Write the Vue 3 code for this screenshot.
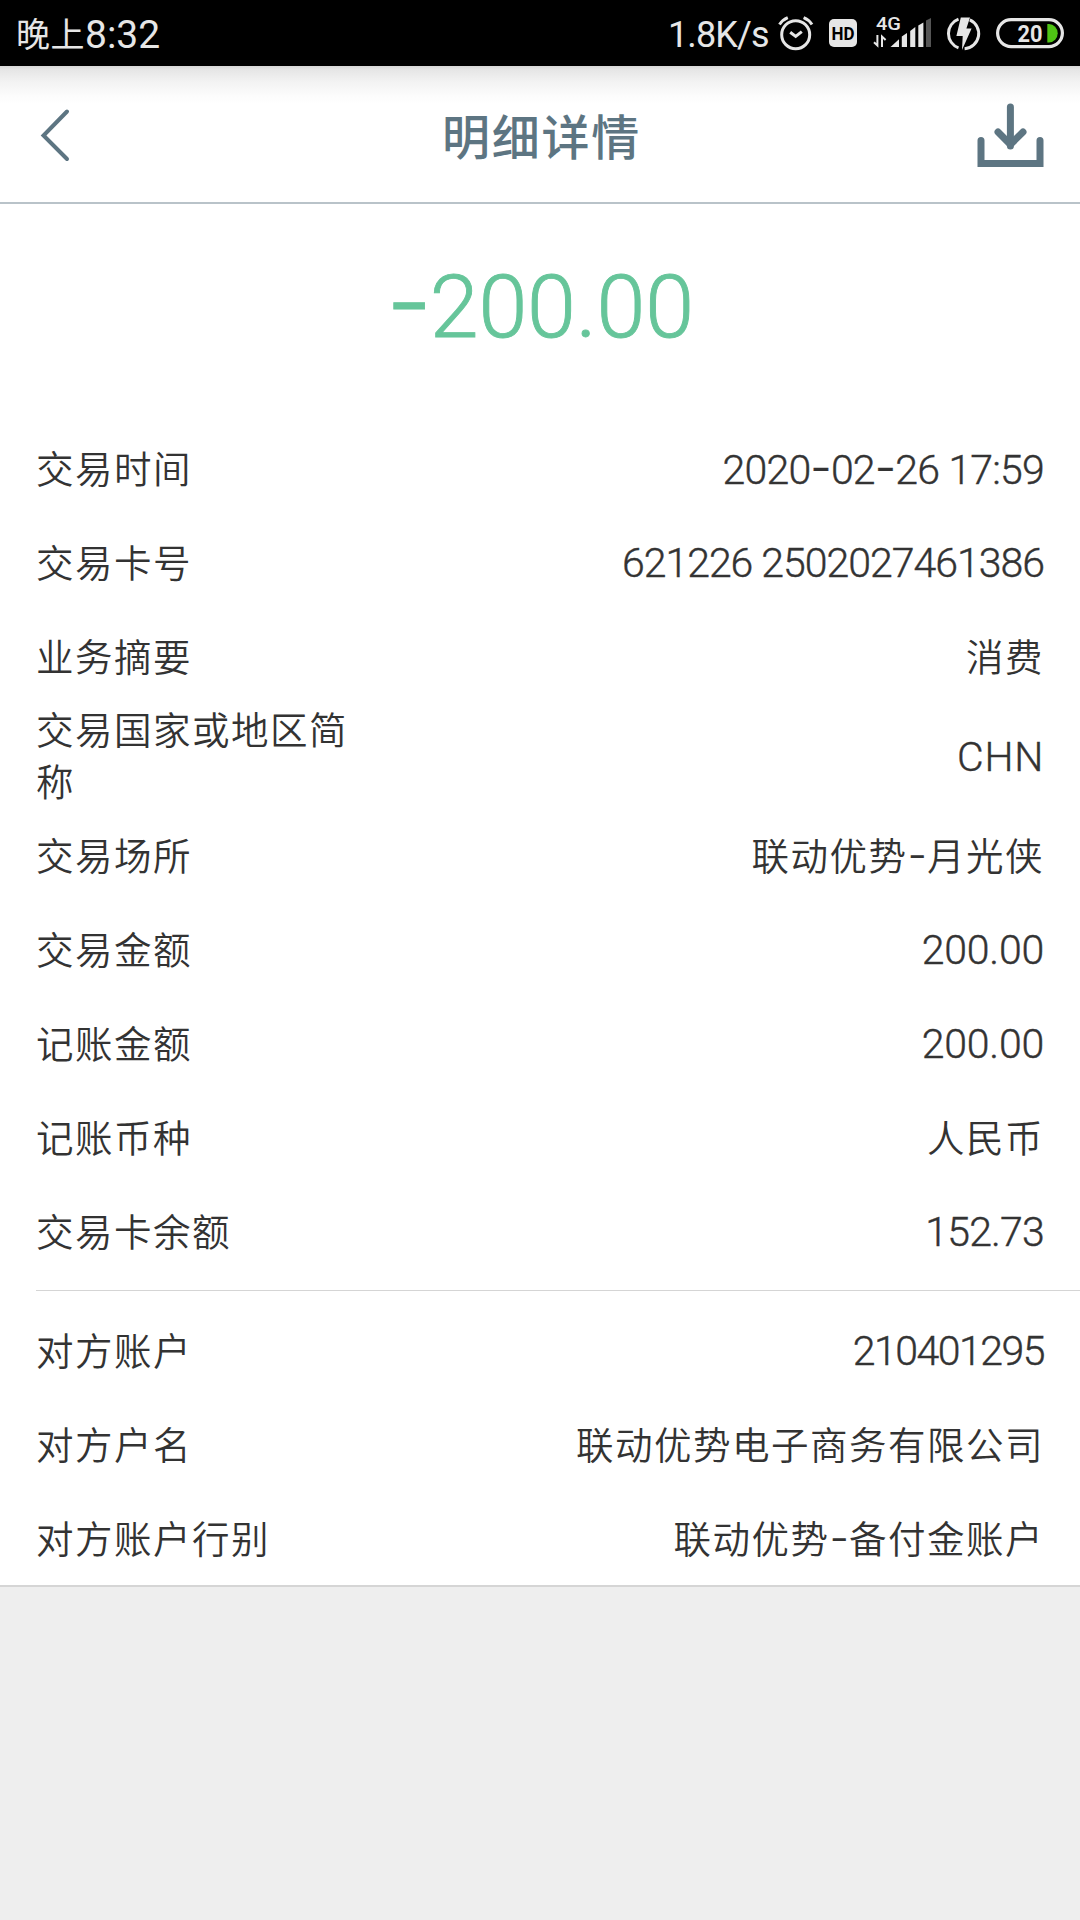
<template>
  <div class="page">
    <header class="status-bar">
      <div class="clock"><span class="clock-cn">晚上</span>8:32</div>
      <div class="status-right">
        <span class="net-speed">1.8K/s</span>
        <svg class="icon-alarm" width="36" height="38" viewBox="0 0 36 38">
          <g fill="none" stroke="#e6e6e6" stroke-width="3">
            <circle cx="17.7" cy="20.7" r="14" />
            <path d="M1.5 10.5Q4.5 5.8 9.8 3.6M25.6 3.6Q31 5.8 34 10.5" />
            <path d="M12.2 18.2L17.7 22.4L23.8 17.6" />
          </g>
        </svg>
        <svg class="icon-hd" width="28" height="38" viewBox="0 0 28 38">
          <rect y="5" width="28" height="28" rx="5" fill="#e6e6e6" />
          <text x="14" y="26" text-anchor="middle" textLength="23" lengthAdjust="spacingAndGlyphs">HD</text>
        </svg>
        <svg class="icon-signal" width="60" height="38" viewBox="0 0 60 38">
          <text x="4" y="16" textLength="25" lengthAdjust="spacingAndGlyphs">4G</text>
          <g fill="none" stroke="#e6e6e6" stroke-width="2">
            <path d="M5.4 21V31.5L2 28.2M10 33V22.5L13.6 26" />
          </g>
          <g fill="#e6e6e6">
            <path d="M18.5 33L27 25.3V33Z" />
            <path d="M29.8 33V22.5L35 19V33Z" />
            <path d="M38.2 33V17L43.3 13V33Z" />
            <path d="M46.3 33V11.5L51.4 8.5V33Z" />
          </g>
          <path d="M54 33V6.5L59 4V33Z" fill="#555" />
        </svg>
        <svg class="icon-charge" width="36" height="38" viewBox="0 0 36 38">
          <g fill="none" stroke="#e6e6e6" stroke-width="3">
            <path d="M12.5 5.2A15.2 15.2 0 0 0 12.5 33.8" />
            <path d="M23.8 5.8A15.2 15.2 0 0 1 18.6 34.8" />
          </g>
          <path d="M14.8 3.4H24L20.4 14.4H25.6L16 36L16.7 22H10.4Z" fill="#e6e6e6" />
        </svg>
        <svg class="icon-battery" width="68" height="38" viewBox="0 0 68 38">
          <rect x="1.6" y="5.6" width="64.8" height="27" rx="13.5" fill="none" stroke="#e6e6e6" stroke-width="3.2" />
          <path d="M51.3 10H53A8.7 9.2 0 0 1 53 28.4H51.3Z" fill="#4fc414" />
          <text x="21.5" y="27.5" textLength="25" lengthAdjust="spacingAndGlyphs">20</text>
        </svg>
      </div>
    </header>

    <nav class="nav-bar">
      <svg class="icon-back" width="32" height="56" viewBox="0 0 32 56">
        <path d="M28 4.5L4.5 28.5L28 52" fill="none" stroke="#5d7582" stroke-width="4" stroke-linecap="round" />
      </svg>
      <h1 class="nav-title">明细详情</h1>
      <svg class="icon-download" width="68" height="64" viewBox="0 0 68 64">
        <g fill="none" stroke="#5d7582" stroke-width="7" stroke-linecap="round">
          <path d="M5 19.5V42.5H64V19.5" stroke-miterlimit="4" />
          <path d="M34.4-14V25" />
          <path d="M22 11L34.4 23.5L47 11" stroke-linejoin="round" />
        </g>
      </svg>
    </nav>

    <main class="detail">
      <div class="amount"><span class="dash">-</span>200.00</div>

      <section v-for="(group, i) in groups" :key="i" class="group">
        <div v-for="row in group" :key="row.label" class="row">
          <span class="label">{{ row.label }}</span>
          <span class="value" :class="row.type">
            <span v-for="(part, n) in splitDash(row.value)" :key="n" :class="{ dash: part === '-' }">{{ part }}</span>
          </span>
        </div>
      </section>
    </main>
  </div>
</template>

<script setup>
const groups = [
  [
    { label: '交易时间', value: '2020-02-26 17:59', type: 'date' },
    { label: '交易卡号', value: '621226 2502027461386', type: 'card' },
    { label: '业务摘要', value: '消费', type: 'text' },
    { label: '交易国家或地区简称', value: 'CHN', type: 'code' },
    { label: '交易场所', value: '联动优势-月光侠', type: 'text' },
    { label: '交易金额', value: '200.00', type: 'money' },
    { label: '记账金额', value: '200.00', type: 'money' },
    { label: '记账币种', value: '人民币', type: 'text' },
    { label: '交易卡余额', value: '152.73', type: 'balance' }
  ],
  [
    { label: '对方账户', value: '210401295', type: 'account' },
    { label: '对方户名', value: '联动优势电子商务有限公司', type: 'text' },
    { label: '对方账户行别', value: '联动优势-备付金账户', type: 'text' }
  ]
]

// dashes are drawn in a wider face than the digits
const splitDash = (value) => value.split(/(-)/)
</script>

<style>
body {
  background: #eee;
}
</style>

<style scoped>
.page {
  width: 1080px;
  height: 1920px;
  overflow: hidden;
  background: #eee;
  color: #333;
  font-family: Roboto, "Noto Sans CJK SC", sans-serif;
  font-weight: 350;
}

.status-bar {
  display: flex;
  justify-content: space-between;
  align-items: center;
  height: 66px;
  padding: 0 16px;
  background: #000;
  color: #e6e6e6;
}

.clock {
  display: flex;
  align-items: center;
  font-size: 39px;
  font-weight: 400;
  line-height: 66px;
  padding-top: 4px;
}

.clock-cn {
  font-size: 34px;
  letter-spacing: 0.5px;
}

.status-right {
  display: flex;
  align-items: center;
}

.net-speed {
  width: 100px;
  margin-right: 10px;
  font-size: 36px;
  font-weight: 400;
  letter-spacing: -0.9px;
  line-height: 66px;
  white-space: nowrap;
  padding-top: 4px;
}

.icon-alarm {
  margin-right: 15px;
}

.icon-hd {
  margin-right: 15px;
}

.icon-hd text {
  font: 700 18px Roboto, sans-serif;
  fill: #000;
}

.icon-signal {
  margin-right: 14px;
}

.icon-signal text {
  font: 500 18px Roboto, sans-serif;
  fill: #e6e6e6;
}

.icon-charge {
  margin-right: 14px;
}

.icon-battery text {
  font: 700 24px Roboto, sans-serif;
  fill: #e6e6e6;
}

.nav-bar {
  display: flex;
  justify-content: space-between;
  align-items: center;
  box-sizing: border-box;
  height: 138px;
  padding: 0 36px 0 39px;
  border-bottom: 2px solid #b9c3c9;
  background: linear-gradient(#d8d8d8 0, #e6e6e6 4px, #f3f3f3 16px, #fcfcfc 30px, #fff 38px);
}

.icon-back {
  margin-top: 2px;
}

.nav-title {
  margin: 0 0 0 36px;
  font-size: 48px;
  font-weight: 500;
  letter-spacing: 1.7px;
  color: #5d7582;
}

.icon-download {
  overflow: visible;
  margin-top: 37px;
}

.detail {
  background: #fff;
  border-bottom: 2px solid #d5d5d5;
}

.amount {
  height: 218px;
  box-sizing: border-box;
  line-height: 206px;
  text-align: center;
  font-size: 88px;
  letter-spacing: -0.2px;
  color: #66c59a;
  -webkit-text-stroke: 0.9px #66c59a;
}

.dash {
  font-family: Inter, sans-serif;
  font-size: 1.15em;
  line-height: 1;
}

.amount .dash {
  margin-right: -2px;
  font-weight: 300;
}

.group + .group {
  padding-top: 13px;
  margin-bottom: -1px;
}

.group:not(:last-child)::after {
  content: '';
  display: block;
  height: 1px;
  margin: 11px 0 0 36px;
  background: #d5d5d5;
}

.row {
  display: flex;
  justify-content: space-between;
  align-items: center;
  height: 94px;
  padding: 0 36px;
}

/* the country label wraps onto a second line */
.row:has(.code) {
  height: 105px;
}

.label {
  width: 320px;
  padding-top: 1px;
  font-size: 37.5px;
  line-height: 52px;
  letter-spacing: 1.5px;
}

.value {
  font-size: 41px;
  line-height: 52px;
  white-space: nowrap;
  -webkit-text-stroke: 0.4px #333;
}

.value.text {
  padding-top: 1px;
  font-size: 37.5px;
  letter-spacing: 1.5px;
  -webkit-text-stroke: 0;
}

.value.text .dash {
  margin-right: -1.5px;
}

.value.date {
  letter-spacing: -0.8px;
}

.value.card {
  letter-spacing: -1px;
}

.value.money {
  letter-spacing: -0.2px;
}

.value.balance {
  letter-spacing: -0.8px;
}

.value.account {
  letter-spacing: -1.5px;
}

.value.code {
  letter-spacing: 0.7px;
}
</style>
